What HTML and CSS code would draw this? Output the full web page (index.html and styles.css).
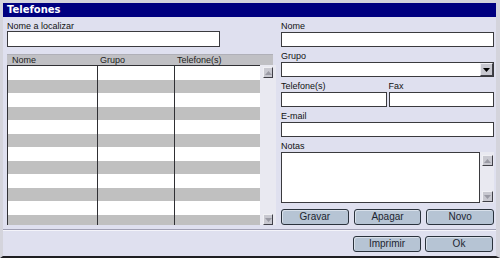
FILE: index.html
```html
<!DOCTYPE html>
<html lang="pt">
<head>
<meta charset="utf-8">
<title>Telefones</title>
<link rel="stylesheet" href="styles.css">
</head>
<body>
<div class="window">
  <div class="titlebar">Telefones</div>
  <div class="main">
    <div class="left">
      <div class="lbl">Nome a localizar</div>
      <input class="field search" type="text">
      <div class="list">
        <div class="list-head">
          <span class="h h1">Nome</span><span class="h h2">Grupo</span><span class="h h3">Telefone(s)</span>
        </div>
        <div class="list-body">
          <div class="rows">
            <div class="row"><div class="c c1"></div><div class="c c2"></div><div class="c c3"></div></div>
            <div class="row"><div class="c c1"></div><div class="c c2"></div><div class="c c3"></div></div>
            <div class="row"><div class="c c1"></div><div class="c c2"></div><div class="c c3"></div></div>
            <div class="row"><div class="c c1"></div><div class="c c2"></div><div class="c c3"></div></div>
            <div class="row"><div class="c c1"></div><div class="c c2"></div><div class="c c3"></div></div>
            <div class="row"><div class="c c1"></div><div class="c c2"></div><div class="c c3"></div></div>
            <div class="row"><div class="c c1"></div><div class="c c2"></div><div class="c c3"></div></div>
            <div class="row"><div class="c c1"></div><div class="c c2"></div><div class="c c3"></div></div>
            <div class="row"><div class="c c1"></div><div class="c c2"></div><div class="c c3"></div></div>
            <div class="row"><div class="c c1"></div><div class="c c2"></div><div class="c c3"></div></div>
            <div class="row"><div class="c c1"></div><div class="c c2"></div><div class="c c3"></div></div>
            <div class="row"><div class="c c1"></div><div class="c c2"></div><div class="c c3"></div></div>
          </div>
          <div class="vscroll">
            <div class="sbtn"><svg width="7" height="4" viewBox="0 0 7 4"><path d="M0 4 L3.5 0 L7 4 Z" fill="#9a9aa4"/></svg></div>
            <div class="sbtn"><svg width="7" height="4" viewBox="0 0 7 4"><path d="M0 0 L3.5 4 L7 0 Z" fill="#9a9aa4"/></svg></div>
          </div>
        </div>
      </div>
    </div>
    <div class="right">
      <div class="fld">
        <div class="lbl">Nome</div>
        <input class="field" type="text">
      </div>
      <div class="fld">
        <div class="lbl">Grupo</div>
        <div class="field select">
          <span class="sel-val"></span>
          <span class="dd"><svg width="7" height="4" viewBox="0 0 7 4"><path d="M0 0 L3.5 4 L7 0 Z" fill="#000"/></svg></span>
        </div>
      </div>
      <div class="fld pair">
        <div class="sub">
          <div class="lbl">Telefone(s)</div>
          <input class="field" type="text">
        </div>
        <div class="sub">
          <div class="lbl">Fax</div>
          <input class="field" type="text">
        </div>
      </div>
      <div class="fld">
        <div class="lbl">E-mail</div>
        <input class="field" type="text">
      </div>
      <div class="fld">
        <div class="lbl">Notas</div>
        <div class="notes">
          <textarea class="field area"></textarea>
          <div class="nscroll">
            <div class="sbtn small"><svg width="7" height="4" viewBox="0 0 7 4"><path d="M0 4 L3.5 0 L7 4 Z" fill="#9a9aa4"/></svg></div>
            <div class="sbtn small"><svg width="7" height="4" viewBox="0 0 7 4"><path d="M0 0 L3.5 4 L7 0 Z" fill="#9a9aa4"/></svg></div>
          </div>
        </div>
      </div>
      <div class="actions">
        <button class="btn">Gravar</button>
        <button class="btn">Apagar</button>
        <button class="btn">Novo</button>
      </div>
    </div>
  </div>
  <div class="footer">
    <button class="btn wide">Imprimir</button>
    <button class="btn wide">Ok</button>
  </div>
</div>
</body>
</html>
```

FILE: styles.css
```css
* { box-sizing: border-box; }

html, body {
  margin: 0;
  padding: 0;
  width: 500px;
  height: 258px;
  overflow: hidden;
  background: #d6d6de;
}

.window {
  width: 500px;
  height: 258px;
  display: flex;
  flex-direction: column;
  background: #dfe0ef;
  border-top: 3px solid #d4d4dc;
  border-left: 3px solid #d4d4dc;
  border-right: 4px solid #d4d4dc;
  border-bottom: 2px solid #1e1e22;
  font-family: "Liberation Sans", Arial, sans-serif;
  font-size: 9px;
  color: #111;
}

.titlebar {
  height: 14px;
  flex: none;
  background: #000080;
  color: #fff;
  font-family: "DejaVu Sans", sans-serif;
  font-weight: bold;
  font-size: 10px;
  line-height: 14px;
  padding-left: 4px;
}

.main {
  height: 212px;
  flex: none;
  display: flex;
  gap: 5px;
  padding: 4px 2px 0 4px;
}

.left {
  width: 269px;
  display: flex;
  flex-direction: column;
}

.lbl {
  line-height: 11px;
  height: 11px;
  white-space: nowrap;
}

.left > .lbl {
  height: 10px;
  line-height: 10px;
}

.field {
  display: block;
  margin: 0;
  padding: 0 2px;
  height: 15px;
  width: 100%;
  border: 1px solid #3a3a3e;
  background: #fff;
  font: inherit;
  outline: none;
  border-radius: 0;
  -webkit-appearance: none;
  appearance: none;
}

.search {
  width: 213px;
  height: 16px;
}

.list {
  margin-top: 7px;
  display: flex;
  flex-direction: column;
}

.list-head {
  width: 266px;
  height: 11px;
  background: #c0c0c4;
  border-top: 1px solid #b0b0b8;
  display: flex;
  line-height: 10px;
  color: #222;
  white-space: nowrap;
}

.h1 { width: 93px; padding-left: 5px; }
.h2 { width: 77px; padding-left: 0; }
.h3 { padding-left: 0; }

.list-body {
  display: flex;
  height: 160px;
}

.rows {
  width: 253px;
  height: 160px;
  overflow: hidden;
  border-left: 1px solid #303034;
  border-top: 1px solid #303034;
}

.row {
  display: flex;
  height: 13.5px;
}

.row:nth-child(even) { background: #c0c0c0; }
.row:nth-child(odd) { background: #fff; }

.c1 { width: 90px; border-right: 1px solid #303034; }
.c2 { width: 77px; border-right: 1px solid #303034; }
.c3 { flex: 1; }

.vscroll {
  width: 16px;
  background: #e9e9f1;
  display: flex;
  flex-direction: column;
  justify-content: space-between;
  padding: 2px 3px 0 3px;
}

.sbtn {
  width: 10px;
  height: 11px;
  background: #c8c8d0;
  border-top: 1px solid #f0f0f4;
  border-left: 1px solid #f0f0f4;
  border-right: 1px solid #404048;
  border-bottom: 1px solid #404048;
  display: flex;
  align-items: center;
  justify-content: center;
}

.right {
  width: 213px;
  display: flex;
  flex-direction: column;
  gap: 4px;
}

.fld { display: flex; flex-direction: column; }

.pair {
  flex-direction: row;
  gap: 2px;
}

.pair .sub { flex: 1; display: flex; flex-direction: column; }

.select {
  display: flex;
  padding: 0;
  justify-content: flex-end;
}

.dd {
  width: 13px;
  height: 13px;
  background: #c8c8d0;
  border-top: 1px solid #f0f0f4;
  border-left: 1px solid #f0f0f4;
  border-right: 1px solid #404048;
  border-bottom: 1px solid #404048;
  display: flex;
  align-items: center;
  justify-content: center;
}

.notes {
  display: flex;
  height: 51px;
}

.area {
  flex: 1;
  height: 51px;
  resize: none;
  padding: 2px;
}

.nscroll {
  width: 14px;
  background: #e9e9f1;
  display: flex;
  flex-direction: column;
  justify-content: space-between;
  padding: 3px 1px 1px 2px;
}

.sbtn.small {
  width: 11px;
  height: 11px;
}

.actions {
  margin-top: 2px;
  display: flex;
  gap: 5px;
}

.btn {
  margin: 0;
  height: 16px;
  padding: 0;
  flex: 1;
  background: #b6c4d4;
  border: 1px solid #2a323c;
  border-radius: 3px;
  box-shadow: inset 1px 1px 0 #d8e0ea;
  font-family: "Liberation Sans", Arial, sans-serif;
  font-size: 10px;
  color: #1c2430;
  line-height: 14px;
}

.footer {
  height: 27px;
  flex: none;
  display: flex;
  justify-content: flex-end;
  gap: 4px;
  padding: 6px 3px 0 0;
  border-top: 1px solid #a0a0b4;
  box-shadow: inset 0 1px 0 #f4f4fa;
}

.btn.wide {
  flex: none;
  width: 68px;
  height: 16px;
}
```
